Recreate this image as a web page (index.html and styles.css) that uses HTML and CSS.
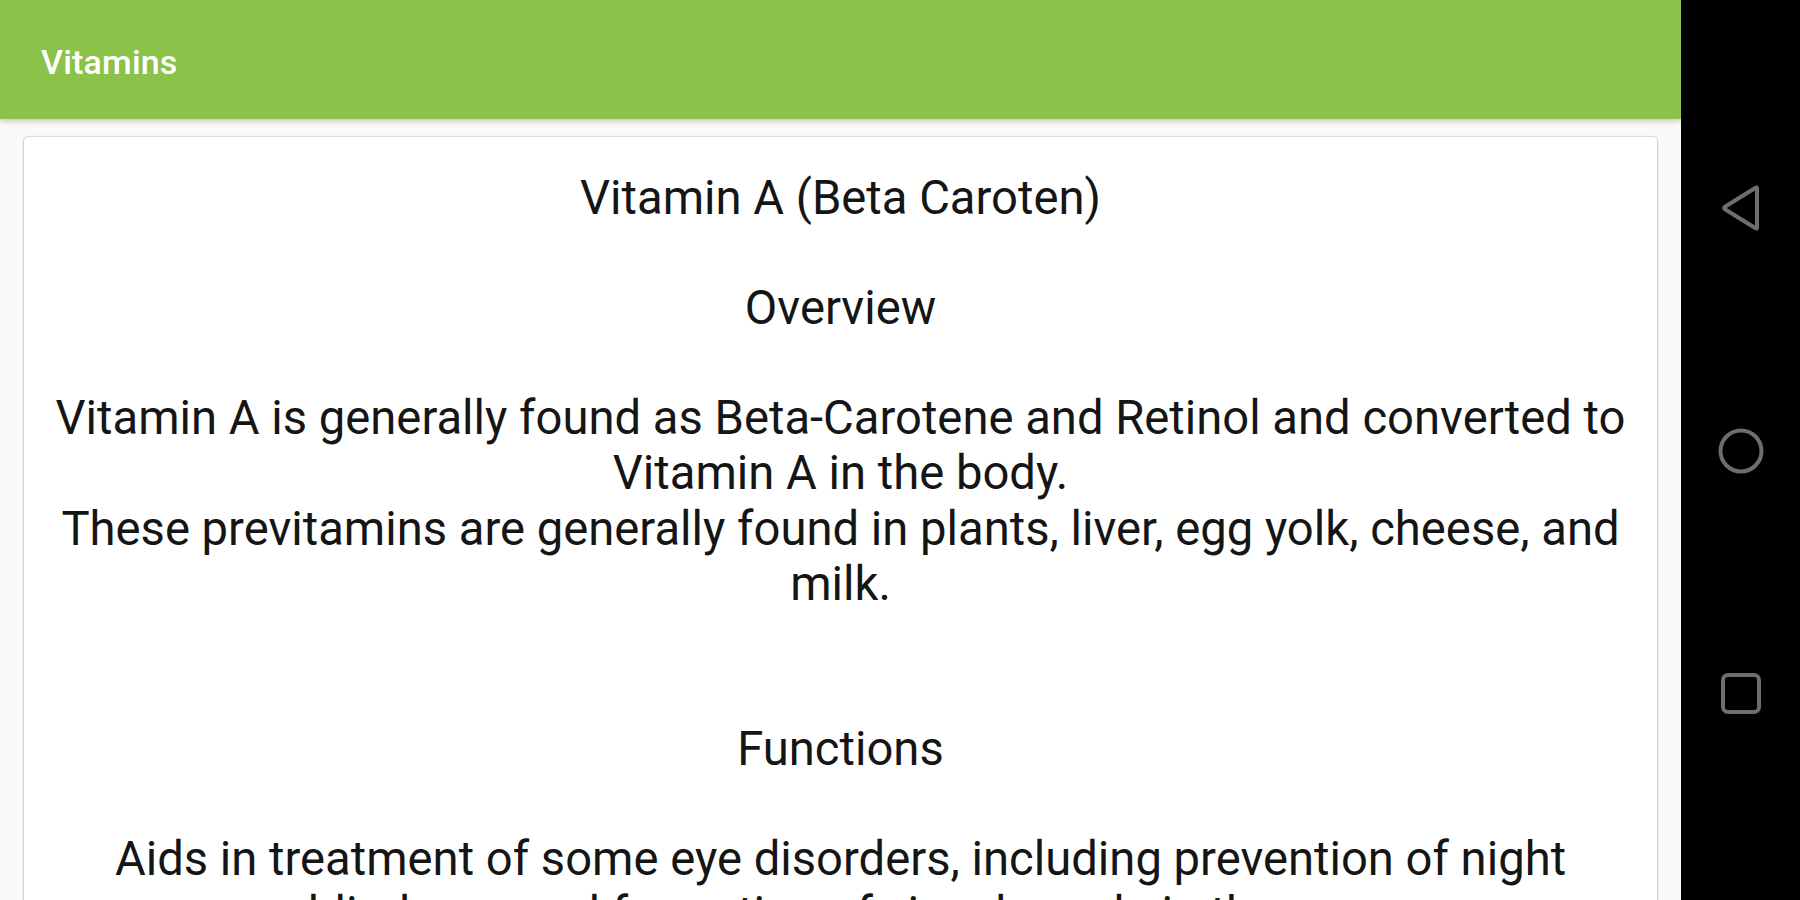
FILE: index.html
```html
<!DOCTYPE html>
<html lang="en">
<head>
<meta charset="utf-8">
<title>Vitamins</title>
<link rel="stylesheet" href="styles.css">
</head>
<body>
<div class="screen">
  <div class="app">
    <header class="toolbar">
      <span class="toolbar-title">Vitamins</span>
    </header>
    <main class="content">
      <article class="card">
        <h1 class="line">Vitamin A (Beta Caroten)</h1>
        <h2 class="line gap1">Overview</h2>
        <p class="line gap1">Vitamin A is generally found as Beta-Carotene and Retinol and converted to Vitamin A in the body.<br>These previtamins are generally found in plants, liver, egg yolk, cheese, and milk.</p>
        <h2 class="line gap2">Functions</h2>
        <p class="line gap1">Aids in treatment of some eye disorders, including prevention of night blindness and formation of visual purple in the eye.</p>
      </article>
    </main>
  </div>
  <nav class="navbar">
    <svg class="nav-icon" viewBox="0 0 48 48" width="48" height="48" aria-label="Back">
      <path d="M40 4.5 L40 43.5 Q40 45 38.6 44.3 L8 25.2 Q6.2 24 8 22.8 L38.6 3.7 Q40 3 40 4.5 Z" fill="none" stroke="#6e6e6e" stroke-width="4" stroke-linejoin="round"/>
    </svg>
    <svg class="nav-icon" viewBox="0 0 48 48" width="48" height="48" aria-label="Home">
      <circle cx="24" cy="24" r="20.5" fill="none" stroke="#6e6e6e" stroke-width="4"/>
    </svg>
    <svg class="nav-icon" viewBox="0 0 48 48" width="48" height="48" aria-label="Recents">
      <rect x="6" y="5" width="36" height="37" rx="5" fill="none" stroke="#6e6e6e" stroke-width="4"/>
    </svg>
  </nav>
</div>
</body>
</html>
```

FILE: styles.css
```css
html, body {
  margin: 0;
  padding: 0;
  width: 1800px;
  height: 900px;
  overflow: hidden;
  background: #000;
  font-family: Roboto, "Noto Sans", "Liberation Sans", sans-serif;
}

.screen {
  display: flex;
  width: 1800px;
  height: 900px;
}

.app {
  flex: 0 0 1681px;
  display: flex;
  flex-direction: column;
  background: #fafafa;
  overflow: hidden;
}

.toolbar {
  flex: 0 0 119px;
  display: flex;
  align-items: center;
  padding-left: 41px;
  background: #8bc34a;
  box-shadow: 0 2px 6px rgba(0, 0, 0, 0.22);
  position: relative;
  z-index: 1;
}

.toolbar-title {
  color: #fff;
  font-size: 34px;
  font-weight: 500;
  letter-spacing: 0.2px;
  padding-top: 5px;
}

.content {
  flex: 1;
  padding: 18px 24px 0 24px;
}

.card {
  background: #fff;
  border-radius: 4px;
  box-shadow: 0 0 2px rgba(0, 0, 0, 0.45), 0 2px 3px rgba(0, 0, 0, 0.12);
  padding: 34px 20px 40px 20px;
  min-height: 900px;
  color: #151515;
  text-align: center;
}

.line {
  margin: 0;
  font-size: 47.2px;
  font-weight: 400;
  line-height: 55.1px;
}

.gap1 {
  margin-top: 55.1px;
}

.gap2 {
  margin-top: 110.2px;
}

.navbar {
  flex: 0 0 119px;
  background: #000;
  display: flex;
  flex-direction: column;
  align-items: center;
  padding-top: 184px;
  gap: 195px;
}

.nav-icon {
  display: block;
}
```
